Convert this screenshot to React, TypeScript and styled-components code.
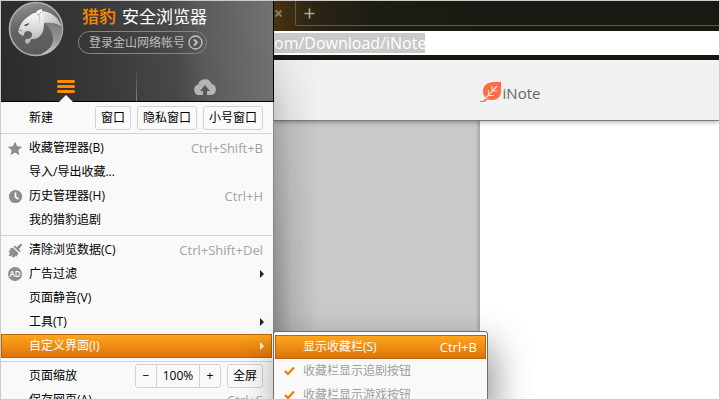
import React from "react";
import styled, { createGlobalStyle, css } from "styled-components";

const Global = createGlobalStyle`
  * { box-sizing: border-box; }
  body { margin: 0; background: #ccc; }
  button, input { font: inherit; color: inherit; margin: 0; }
  body, #root { font-family: "Open Sans", "Noto Sans CJK SC", sans-serif; font-size: 12px; line-height: 24px; }
`;

const Frame = styled.div`
  position: relative;
  display: flex;
  height: 100vh;
  border: 1px solid #ccc;
  overflow: hidden;
  background: #fff;
`;

const MainMenu = styled.nav`
  flex: 0 0 273px;
  display: flex;
  flex-direction: column;
  background: #f9f9f9;
  border-right: 1px solid #858585;
  color: #000;
  z-index: 2;
`;

const MenuHeader = styled.header`
  flex: none;
  margin-right: -1px;
  border-right: 1px solid #000;
  border-bottom: 1px solid #000;
  background: linear-gradient(84deg, #2b2b2b 0%, #383838 35%, #484848 63%, #5b5b5b 74%, #737373 100%);
`;

const Brand = styled.div`
  display: flex;
  gap: 14px;
  height: 70px;
  padding-left: 7px;
`;

const BrandText = styled.div`
  display: flex;
  flex-direction: column;
  align-items: flex-start;
  gap: 2px;
  padding-top: 3px;
`;

const Title = styled.h1`
  margin: 0 0 0 4px;
  font-size: 17px;
  line-height: 25px;
  font-weight: 400;
  color: #fff;
  span { color: #ff8a00; margin-right: 6px; font-weight: 500; }
`;

const Login = styled.button`
  display: flex;
  align-items: center;
  gap: 3px;
  height: 23px;
  padding: 0 3px 0 10px;
  border: 1px solid #858585;
  border-radius: 12px;
  background: transparent;
  color: #bdbdbd;
  line-height: 20px;
`;

const Tabs = styled.div`
  display: flex;
  height: 30px;
  padding-right: 3px;
`;

const Tab = styled.button<{ $active?: boolean }>`
  display: flex;
  flex: 1;
  position: relative;
  align-items: flex-start;
  justify-content: center;
  padding: 8px 4px 0 0;
  border: 0;
  background: transparent;
  & + & {
    padding: 7px 0 0 4px;
    background: linear-gradient(rgba(160, 160, 160, 0.1), #858585) left / 1px 100% no-repeat;
  }
  ${p => p.$active && css`
    &::after {
      content: "";
      position: absolute;
      bottom: -1px;
      left: calc(50% - 9px);
      border: 7px solid transparent;
      border-top: 0;
      border-bottom: 7px solid #f9f9f9;
    }
  `}
`;

const Section = styled.div`
  flex: none;
  margin-right: 1px;
  padding: 2px 0 3px;
  & + & { border-top: 1px solid #d2d2d2; }
`;

const NewSection = styled(Section)`
  padding: 4px 0 3px;
`;

const Row = styled.div<{ $active?: boolean }>`
  display: flex;
  align-items: center;
  height: 24px;
  padding-right: 9px;
  ${p => p.$active && css`
    color: #fff;
    background: linear-gradient(#ffa81c, #dd700a);
    box-shadow: inset 0 0 0 1px #bd620b;
  `}
`;

const IconSlot = styled.span`
  display: flex;
  flex: 0 0 28px;
  padding-left: 7px;
`;

const Item = styled.button`
  flex: 1;
  padding: 0;
  border: 0;
  background: transparent;
  text-align: left;
  white-space: nowrap;
  line-height: 24px;
`;

const RowLabel = styled.span`
  flex: 1;
`;

const Key = styled.kbd<{ $light?: boolean }>`
  font: inherit;
  font-size: 13px;
  color: ${p => (p.$light ? "#fff" : "#a3a3a3")};
`;

const Arrow = styled.i`
  border: 4px solid transparent;
  border-left-color: currentColor;
  border-right: 0;
  margin-right: -1px;
  opacity: 0.85;
`;

const BoxButton = styled.button`
  height: 24px;
  padding: 0 5px;
  margin-left: 6px;
  border: 1px solid #d2d2d2;
  border-radius: 3px;
  background: #fafafa;
  line-height: 22px;
  white-space: nowrap;
`;

const Zoom = styled.div`
  display: grid;
  grid-template-columns: 20px 44px 20px;
  height: 24px;
  border: 1px solid #d2d2d2;
  border-radius: 3px;
  text-align: center;
  line-height: 22px;
  button { padding: 0; border: 0; background: transparent; line-height: 22px; }
  output { border: solid #d2d2d2; border-width: 0 1px; }
`;

const Browser = styled.section`
  flex: 1;
  min-width: 0;
  display: flex;
  flex-direction: column;
  position: relative;
`;

const TabStrip = styled.div`
  display: flex;
  height: 30px;
  padding-bottom: 5px;
  background: linear-gradient(90deg, #49320f 0, #2c2413 40px, #1d1c13 100px, #181911 240px);
  color: #aaa392;
`;

const CloseTab = styled.button`
  display: flex;
  align-items: center;
  width: 21px;
  padding: 0;
  border: 0;
  background: transparent;
`;

const NewTab = styled.button`
  display: flex;
  flex: 1;
  align-items: center;
  padding: 0 0 0 8px;
  border: solid #5c5a54;
  border-width: 0 0 1px 1px;
  border-radius: 0 0 0 2px;
  background: transparent;
`;

const AddressBar = styled.div`
  display: flex;
  align-items: center;
  height: 29px;
  border-bottom: 5px solid #181911;
  background: #fff;
`;

const Address = styled.input`
  width: 151px;
  height: 20px;
  padding: 0;
  border: 0;
  outline: 0;
  background: #c9c9c9;
  color: #fff;
  font-size: 16px;
`;

const SiteHeader = styled.div`
  display: flex;
  justify-content: center;
  align-items: center;
  flex: none;
  gap: 1px;
  height: 61px;
  padding: 6px 0 0 27px;
  border-bottom: 1px solid #7d7d7d;
  background: #f1f1f1;
  box-shadow: 0 1px 5px rgba(0, 0, 0, 0.35);
  font-size: 15px;
  color: #666;
  z-index: 1;
`;

const Page = styled.main`
  display: flex;
  flex: 1;
  background: #fff;
`;

const Side = styled.aside`
  flex: 0 0 calc(50% - 17px);
  background: #c9c9c9;
  border-right: 1px solid #aaa;
  box-shadow: inset -3px 0 3px -2px rgba(0, 0, 0, 0.2);
`;

const Shade = styled.div`
  position: absolute;
  inset: 30px auto 0 0;
  width: 44px;
  background: linear-gradient(90deg, rgba(0, 0, 0, 0.32), rgba(0, 0, 0, 0.12) 40%, transparent);
  mask-image: linear-gradient(transparent, rgba(0, 0, 0, 0.5) 80px, #000 300px);
  pointer-events: none;
  z-index: 2;
`;

const SubMenu = styled.nav`
  position: absolute;
  top: 330px;
  left: 272px;
  width: 215px;
  padding: 3px 1px;
  border: 1px solid #6e6e6e;
  border-radius: 3px;
  background: #f9f9f9;
  box-shadow: 6px 14px 36px rgba(0, 0, 0, 0.42);
  color: #a0a0a0;
  z-index: 3;
`;

const Logo = () => (
  <svg width="56" height="56" viewBox="0 0 56 56" aria-hidden="true">
    <defs>
      <linearGradient id="disc" x1="0" y1="0" x2="0.3" y2="1">
        <stop offset="0" stopColor="#9a9a9a" />
        <stop offset="0.5" stopColor="#646464" />
        <stop offset="1" stopColor="#5c5c5c" />
      </linearGradient>
      <linearGradient id="cat" x1="0" y1="0" x2="0" y2="1">
        <stop offset="0" stopColor="#fff" />
        <stop offset="0.5" stopColor="#dedede" />
        <stop offset="1" stopColor="#b0b0b0" />
      </linearGradient>
      <linearGradient id="mane" x1="0" y1="0" x2="1" y2="0.6">
        <stop offset="0" stopColor="#f4f4f4" />
        <stop offset="1" stopColor="#b8b8b8" />
      </linearGradient>
      <linearGradient id="back" x1="0" y1="0" x2="0" y2="1">
        <stop offset="0" stopColor="#7c7c7c" />
        <stop offset="0.5" stopColor="#929292" />
        <stop offset="1" stopColor="#c8c8c8" />
      </linearGradient>
    </defs>
    <circle cx="28" cy="28" r="26.5" fill="url(#disc)" stroke="#adadad" strokeWidth="1.6" />
    <path d="M36 22c7-1 13 1 18 5 0 8-3 16-8 21-4 3-8 5-13 5 7-3 12-8 12-15 0-6-3-11-9-16z" fill="url(#back)" />
    <path d="M32 10c10 0 18 5 22 16-5-4-11-5-18-4z" fill="url(#mane)" />
    <path d="M28 12c0-2 2-3 6-4 0 1 0 2-1 3 2 3 3 7 3 12 0 5-1 9-4 12-2 2-4 3-7 3-2 0-3 1-3 3-1 1-2 2-3 2-1-1-2-2-2-3l1-2c3 0 6-1 6-4s-2-4-4-4c-3 0-4 2-4 4l-1 1c-2-1-3-2-4-3-1-1-1-3 0-4 1-3 2-6 5-9s6-5 10-7z" fill="url(#cat)" />
    <path d="M16 24l5-2c0 2-2 3-4 3z" fill="#4a4a4a" />
    <path d="M11 29l3 1" stroke="#888" fill="none" />
    <path d="M29 14c2-1 3-1 4-3" stroke="#999" fill="none" />
    <path d="M31 14c1 3 1 5 0 8" stroke="#c4c4c4" fill="none" />
  </svg>
);

const LeafIcon = () => (
  <svg width="22" height="24" viewBox="0 0 22 24" aria-hidden="true">
    <path d="M21 1v9c0 6-4 9-9 9-2 0-3 0-4-1-2 2-3 3-5 3H0v-1h3c1-1 2-2 3-3-2-2-3-4-3-7C3 5 7 1 14 1z" fill="#ff6b45" />
    <path d="M5 18L17 5M8.500 14V9M12 10V5M8 14.500h6M12 10h5" fill="none" stroke="#ffd9cf" strokeWidth="1.2" />
  </svg>
);

const StarIcon = () => (
  <svg width="15" height="15" viewBox="0 0 15 15" aria-hidden="true">
    <path d="M7 .5l2.100 4.800 5 .5-3.800 3.400 1.100 5-4.400-2.600-4.400 2.600 1.100-5L-.1 5.800l5-.5z" fill="#8c8c8c" />
  </svg>
);

const ClockIcon = () => (
  <svg width="15" height="15" viewBox="0 0 15 15" aria-hidden="true">
    <circle cx="7.5" cy="7.5" r="6.6" fill="#8c8c8c" />
    <path d="M7.500 3.500v4.500l3 2" fill="none" stroke="#fff" strokeWidth="1.700" />
  </svg>
);

const BrushIcon = () => (
  <svg width="15" height="15" viewBox="0 0 15 15" aria-hidden="true">
    <path d="M13 .5L14.300 2 10.800 6l1.700 2-1.200 1.300L5.500 3.700 6.700 2.500l2 1.700z" fill="#8c8c8c" />
    <path d="M4.700 4.600l5.700 5.700-2 3.500-1.300-1.300-.3 1.700H3.500l1-2L2 13.300.5 12.500l1.800-2.700-1.500-.3V7.500l2 .3L1.500 6z" fill="#8c8c8c" />
  </svg>
);

const AdBadge = styled.span`
  width: 14px;
  height: 14px;
  border-radius: 7px;
  background: #8c8c8c;
  color: #fff;
  font-size: 8px;
  font-weight: 600;
  line-height: 14px;
  text-align: center;
`;

const CheckIcon = () => (
  <svg width="11" height="10" viewBox="0 0 11 10" aria-hidden="true">
    <path d="M1 5l3 3 6-6.5" fill="none" stroke="#f57c00" strokeWidth="2.2" />
  </svg>
);

const SubSlot = styled.span`
  display: flex;
  flex: 0 0 28px;
  padding-left: 9px;
`;

interface EntryProps {
  label: string;
  icon?: React.ReactNode;
  shortcut?: string;
  arrow?: boolean;
  active?: boolean;
}

const Entry = ({ label, icon, shortcut, arrow, active }: EntryProps) => (
  <Row $active={active}>
    <IconSlot>{icon}</IconSlot>
    <Item>{label}</Item>
    {shortcut && <Key $light={active}>{shortcut}</Key>}
    {arrow && <Arrow />}
  </Row>
);

const SubEntry = ({ label, icon, shortcut, active }: EntryProps) => (
  <Row $active={active}>
    <SubSlot>{icon}</SubSlot>
    <Item>{label}</Item>
    {shortcut && <Key $light={active}>{shortcut}</Key>}
  </Row>
);

export default function App() {
  return (
    <>
      <Global />
      <Frame>
        <MainMenu>
          <MenuHeader>
            <Brand>
              <Logo />
              <BrandText>
                <Title><span>猎豹</span>安全浏览器</Title>
                <Login>
                  登录金山网络帐号
                  <svg width="15" height="15" viewBox="0 0 15 15" aria-hidden="true" fill="none" stroke="#c4c4c4">
                    <circle cx="7.5" cy="7.5" r="6.5" strokeWidth="1.3" />
                    <path d="M6 4.5l3 3-3 3" strokeWidth="1.8" />
                  </svg>
                </Login>
              </BrandText>
            </Brand>
            <Tabs>
              <Tab $active aria-label="菜单">
                <svg width="18" height="15" viewBox="0 0 18 15" aria-hidden="true">
                  <path d="M1.500 2.500h15M1.500 7.500h15M1.500 12.500h15" stroke="#ff8a00" strokeWidth="3" strokeLinecap="round" />
                </svg>
              </Tab>
              <Tab aria-label="云同步">
                <svg width="24" height="18" viewBox="0 0 24 18" aria-hidden="true">
                  <path d="M6 17a5.300 5.300 0 0 1-.8-10.400A7 7 0 0 1 18.600 6 5.600 5.600 0 0 1 18 17h-4v-4h3l-5-6-5 6h3v4z" fill="#b5b5b5" />
                </svg>
              </Tab>
            </Tabs>
          </MenuHeader>
          <NewSection>
            <Row>
              <IconSlot />
              <RowLabel>新建</RowLabel>
              <BoxButton>窗口</BoxButton>
              <BoxButton>隐私窗口</BoxButton>
              <BoxButton>小号窗口</BoxButton>
            </Row>
          </NewSection>
          <Section>
            <Entry icon={<StarIcon />} label="收藏管理器(B)" shortcut="Ctrl+Shift+B" />
            <Entry label="导入/导出收藏..." />
            <Entry icon={<ClockIcon />} label="历史管理器(H)" shortcut="Ctrl+H" />
            <Entry label="我的猎豹追剧" />
          </Section>
          <Section>
            <Entry icon={<BrushIcon />} label="清除浏览数据(C)" shortcut="Ctrl+Shift+Del" />
            <Entry icon={<AdBadge>AD</AdBadge>} label="广告过滤" arrow />
            <Entry label="页面静音(V)" />
            <Entry label="工具(T)" arrow />
            <Entry label="自定义界面(I)" arrow active />
          </Section>
          <Section>
            <Row>
              <IconSlot />
              <RowLabel>页面缩放</RowLabel>
              <Zoom>
                <button aria-label="缩小">−</button>
                <output>100%</output>
                <button aria-label="放大">+</button>
              </Zoom>
              <BoxButton>全屏</BoxButton>
            </Row>
            <Entry label="保存网页(A)" shortcut="Ctrl+S" />
          </Section>
        </MainMenu>
        <Browser>
          <TabStrip>
            <CloseTab aria-label="关闭标签页">
              <svg width="9" height="9" viewBox="0 0 9 9" aria-hidden="true">
                <path d="M1.500 1.500l6 6M7.500 1.500l-6 6" stroke="#8a7a5c" strokeWidth="2" />
              </svg>
            </CloseTab>
            <NewTab aria-label="新标签页">
              <svg width="11" height="11" viewBox="0 0 11 11" aria-hidden="true">
                <path d="M5.500 0.500v10M0.500 5.500h10" stroke="#b0aa9c" strokeWidth="1.600" />
              </svg>
            </NewTab>
          </TabStrip>
          <AddressBar>
            <Address aria-label="地址" defaultValue="om/Download/iNote" />
          </AddressBar>
          <SiteHeader>
            <LeafIcon />
            iNote
          </SiteHeader>
          <Page>
            <Side />
          </Page>
          <Shade />
        </Browser>
        <SubMenu>
          <SubEntry label="显示收藏栏(S)" shortcut="Ctrl+B" active />
          <SubEntry icon={<CheckIcon />} label="收藏栏显示追剧按钮" />
          <SubEntry icon={<CheckIcon />} label="收藏栏显示游戏按钮" />
        </SubMenu>
      </Frame>
    </>
  );
}
